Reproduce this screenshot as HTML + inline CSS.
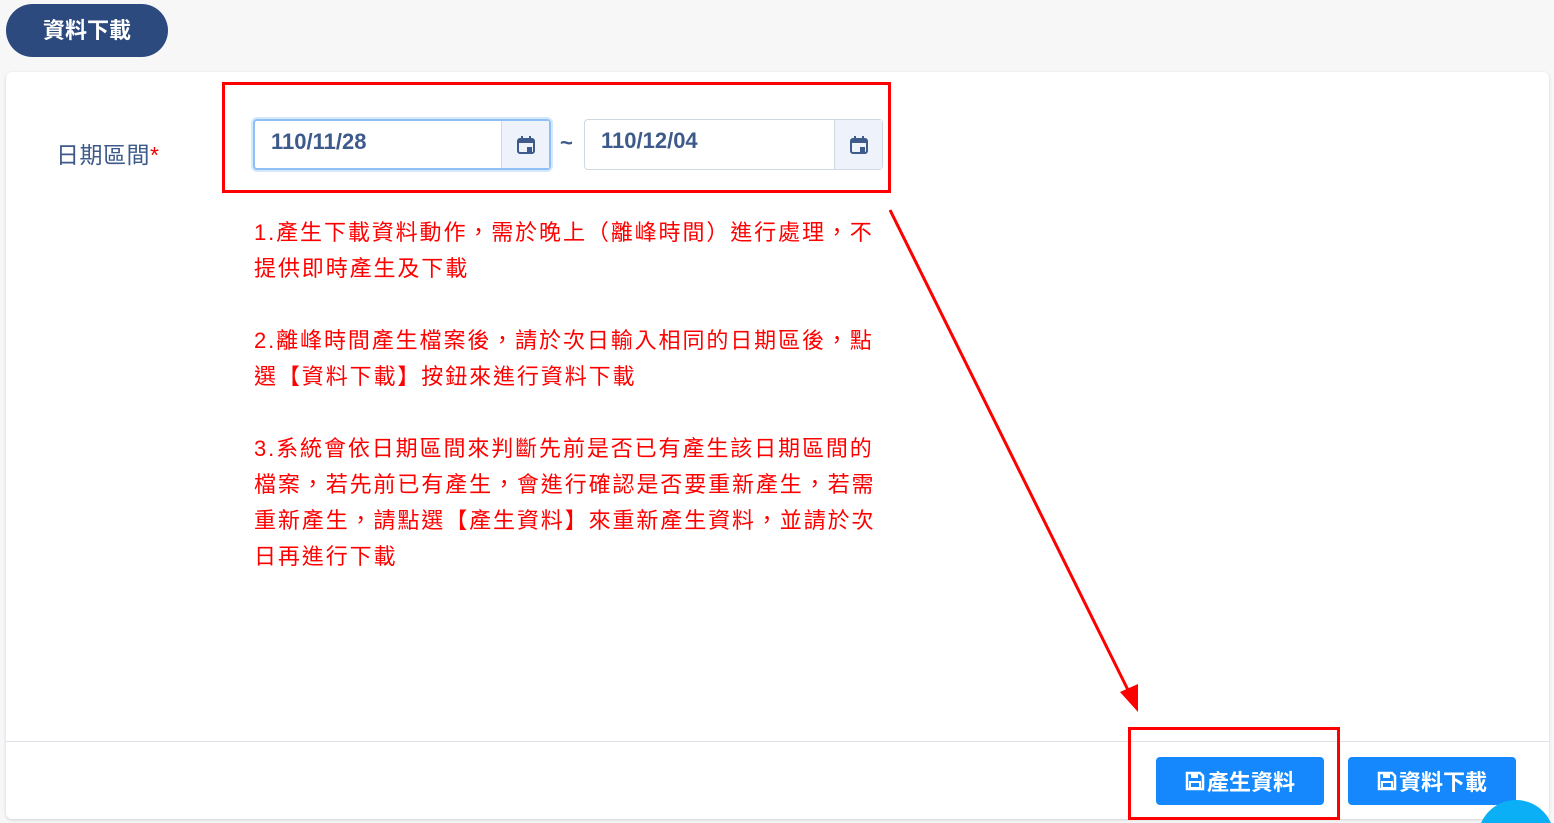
<!DOCTYPE html>
<html style="overflow:hidden;height:823px"><head><meta charset="utf-8"><style>
body{margin:0;width:1554px;height:823px;background:#f7f7f8;overflow:hidden;position:relative;font-family:"Liberation Sans","Noto Sans CJK TC",sans-serif}
.pill{position:absolute;left:6px;top:4px;width:162px;height:53px;border-radius:27px;background:#2c4a7e;color:#fff;font-size:22px;font-weight:bold;line-height:53px;text-align:center}
.card{position:absolute;left:6px;top:72px;width:1543px;height:747px;background:#fff;border-radius:6px;box-shadow:0 1px 3px rgba(0,0,0,.15)}
.lab{position:absolute;left:56px;top:136px;font-size:23px;color:#3d5a8a;letter-spacing:0.5px}
.lab span{color:#e00}
.inp{position:absolute;top:119px;height:51px;border:1px solid #cfd8e3;border-radius:4px;background:#fff;box-sizing:border-box}
.inp .t{position:absolute;left:16px;top:8px;font-size:22px;font-weight:bold;color:#3d5a8a}
.inp .ic{position:absolute;right:0;top:0;width:47px;height:100%;background:#eef3fb;border-left:1px solid #cfd8e3;display:flex;align-items:center;justify-content:center}
.red{position:absolute;border:3px solid #f00;box-sizing:border-box}
.txt{position:absolute;left:254px;top:215px;font-size:22px;line-height:36px;color:#f00;letter-spacing:1.9px;white-space:nowrap}
.line{position:absolute;left:6px;top:741px;width:1543px;height:1px;background:#dde2e8}
.btn{position:absolute;top:757px;height:48px;background:#1488fc;border-radius:4px;color:#fff;font-size:22px;font-weight:bold;display:flex;align-items:center;justify-content:center;gap:2px}
</style></head><body>
<div class="pill">資料下載</div>
<div class="card"></div>
<div class="lab">日期區間<span>*</span></div>
<div class="inp" style="left:253px;width:298px;border:2px solid #8ec0f7;box-shadow:0 0 0 2px #d6e8fc"><div class="t">110/11/28</div><div class="ic"><svg width="20" height="20" viewBox="0 0 20 20"><rect x="2" y="4" width="16" height="14" rx="2" fill="none" stroke="#3d5a8a" stroke-width="2"/><rect x="2" y="4" width="16" height="4" fill="#3d5a8a"/><rect x="5" y="1" width="2" height="4" fill="#3d5a8a"/><rect x="13" y="1" width="2" height="4" fill="#3d5a8a"/><rect x="11" y="12" width="5" height="5" fill="#3d5a8a"/></svg></div></div>
<div style="position:absolute;left:560px;top:130px;font-size:22px;color:#3d5a8a;font-weight:bold">~</div>
<div class="inp" style="left:584px;width:299px"><div class="t">110/12/04</div><div class="ic"><svg width="20" height="20" viewBox="0 0 20 20"><rect x="2" y="4" width="16" height="14" rx="2" fill="none" stroke="#3d5a8a" stroke-width="2"/><rect x="2" y="4" width="16" height="4" fill="#3d5a8a"/><rect x="5" y="1" width="2" height="4" fill="#3d5a8a"/><rect x="13" y="1" width="2" height="4" fill="#3d5a8a"/><rect x="11" y="12" width="5" height="5" fill="#3d5a8a"/></svg></div></div>
<div class="red" style="left:222px;top:82px;width:669px;height:111px"></div>
<div class="txt">1.產生下載資料動作，需於晚上（離峰時間）進行處理，不<br>提供即時產生及下載<br><br>2.離峰時間產生檔案後，請於次日輸入相同的日期區後，點<br>選【資料下載】按鈕來進行資料下載<br><br>3.系統會依日期區間來判斷先前是否已有產生該日期區間的<br>檔案，若先前已有產生，會進行確認是否要重新產生，若需<br>重新產生，請點選【產生資料】來重新產生資料，並請於次<br>日再進行下載</div>
<div class="line"></div>
<div class="btn" style="left:1156px;width:168px">
<svg width="20" height="20" viewBox="0 0 20 20"><path d="M2 2h13l3 3v13H2z" fill="none" stroke="#fff" stroke-width="2.5"/><rect x="6" y="3" width="7" height="4" fill="#fff"/><rect x="5" y="11" width="10" height="6" fill="none" stroke="#fff" stroke-width="2"/></svg>產生資料</div>
<div class="btn" style="left:1348px;width:168px">
<svg width="20" height="20" viewBox="0 0 20 20"><path d="M2 2h13l3 3v13H2z" fill="none" stroke="#fff" stroke-width="2.5"/><rect x="6" y="3" width="7" height="4" fill="#fff"/><rect x="5" y="11" width="10" height="6" fill="none" stroke="#fff" stroke-width="2"/></svg>資料下載</div>
<div class="red" style="left:1128px;top:727px;width:212px;height:93px"></div>
<div style="position:absolute;left:1478px;top:800px;width:76px;height:23px;overflow:hidden"><div style="width:76px;height:76px;border-radius:50%;background:#0aaff5"></div></div>
<svg style="position:absolute;left:0;top:0" width="1554" height="823"><line x1="890" y1="210" x2="1128" y2="690" stroke="#f00" stroke-width="3"/><polygon points="1138,712 1120,692 1138,684" fill="#f00"/></svg>
</body></html>
